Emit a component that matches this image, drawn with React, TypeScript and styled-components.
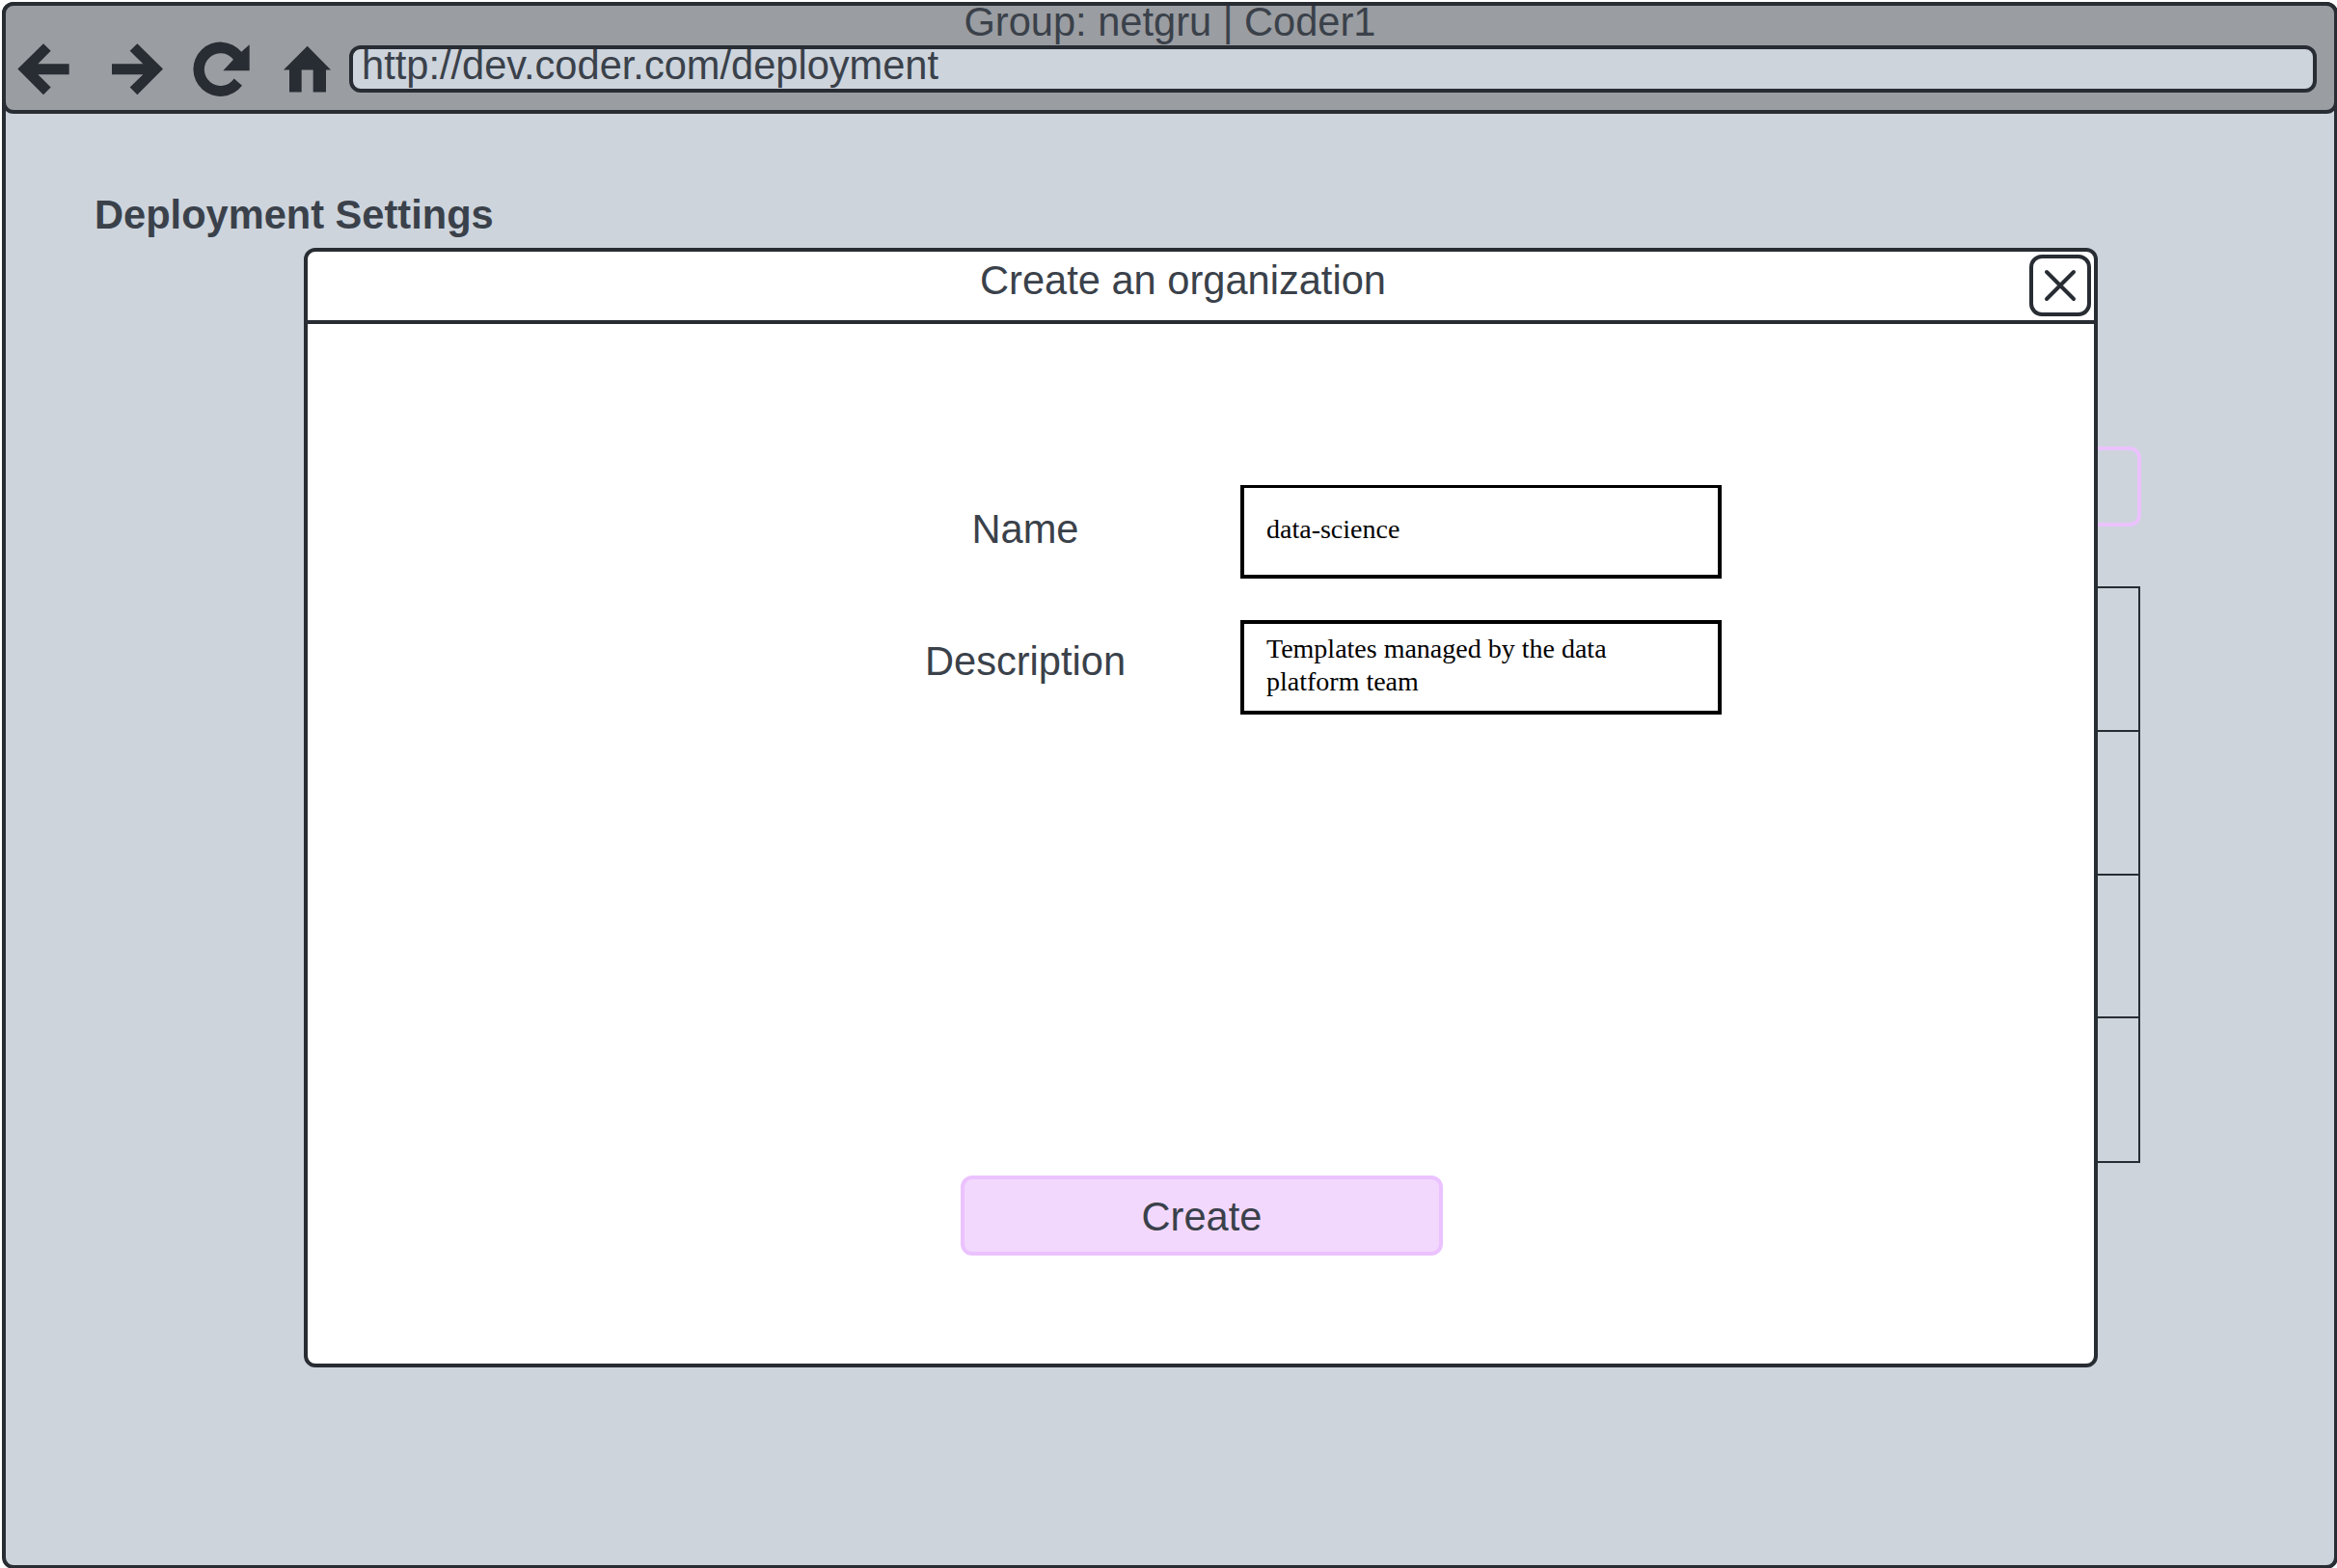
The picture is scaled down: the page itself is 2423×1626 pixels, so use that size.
import React from "react";
import styled, { createGlobalStyle } from "styled-components";

const ink = "#282c33";
const text = "#3a414a";
const page = "#cdd4dc";
const chrome = "#9a9da1";
const pink = "#ebc2ff";
const pinkFill = "#f2d8fd";

const GlobalStyle = createGlobalStyle`
  html, body { margin: 0; padding: 0; background: #fff; overflow: hidden; }
  *, *::before, *::after { box-sizing: border-box; }
`;

const Screen = styled.div`
  width: 2423px;
  height: 1626px;
  overflow: hidden;
  padding: 2px 0 0 2px;
  font-family: "Liberation Sans", Arial, sans-serif;
  font-size: 41.6px;
  color: ${text};
`;

const BrowserWindow = styled.div`
  position: relative;
  width: 2422px;
  height: 1625px;
  border: 4px solid ${ink};
  border-radius: 12px;
  background: ${page};
`;

const Toolbar = styled.header`
  width: 2422px;
  height: 116px;
  margin: -4px 0 0 -4px;
  border: 4px solid ${ink};
  border-radius: 12px;
  background: ${chrome};
`;

const WindowTitle = styled.div`
  height: 41px;
  line-height: 33px;
  text-align: center;
`;

const NavRow = styled.div`
  display: flex;
  align-items: center;
  height: 49px;
  padding-right: 18px;
`;

const NavIcons = styled.nav`
  display: flex;
  flex: none;
  width: 356px;
  padding-left: 12px;
`;

const IconButton = styled.button<{ $width: number; $gap: number }>`
  flex: none;
  width: ${(p) => p.$width}px;
  height: 58px;
  margin: 0 ${(p) => p.$gap}px 0 0;
  padding: 0;
  border: 0;
  background: none;
  color: ${ink};

  svg {
    display: block;
    width: 100%;
    height: 100%;
    fill: currentColor;
  }
`;

const AddressBar = styled.div`
  flex: 1;
  height: 49px;
  padding-left: 9px;
  border: 4px solid ${ink};
  border-radius: 12px;
  background: ${page};
  line-height: 33px;
  white-space: nowrap;
`;

const Content = styled.main`
  padding: 80px 0 0 91px;
`;

const Heading = styled.h1`
  margin: 0;
  padding-left: 1px;
  font-size: 41.6px;
  font-weight: 700;
  line-height: 50px;
`;

const Section = styled.section`
  display: flex;
  flex-direction: column;
  align-items: flex-end;
  width: 2123px;
  padding-top: 215px;
`;

const OutlineButton = styled.div`
  width: 500px;
  height: 83px;
  margin-bottom: 62px;
  border: 4px solid ${pink};
  border-radius: 12px;
`;

const Table = styled.div`
  width: 1700px;
  margin-right: 1px;
  border: 2px solid ${ink};
  border-top: 0;
`;

const TableRow = styled.div<{ $height: number }>`
  height: ${(p) => p.$height}px;
  border-top: 2px solid ${ink};
`;

const Dialog = styled.div`
  position: absolute;
  top: 251px;
  left: 309px;
  display: flex;
  flex-direction: column;
  width: 1860px;
  height: 1161px;
  border: 4px solid ${ink};
  border-radius: 12px;
  background: #fff;
`;

const DialogHeader = styled.div`
  display: flex;
  flex: none;
  height: 75px;
  padding: 3px 3px 0 30px;
  border-bottom: 4px solid ${ink};
`;

const DialogTitle = styled.div`
  flex: 1;
  line-height: 53px;
  text-align: center;
`;

const CloseButton = styled.button`
  width: 64px;
  height: 64px;
  padding: 0;
  border: 4px solid ${ink};
  border-radius: 13px;
  background: #fff;

  svg {
    display: block;
    width: 56px;
    height: 56px;
    fill: none;
    stroke: ${ink};
    stroke-width: 4;
    stroke-linecap: round;
  }
`;

const Form = styled.div`
  display: flex;
  flex: 1;
  flex-direction: column;
  padding: 167px 386px 0 593px;
`;

const Field = styled.label<{ $gap: number }>`
  display: flex;
  justify-content: space-between;
  margin-bottom: ${(p) => p.$gap}px;
`;

const FieldLabel = styled.span<{ $line: number }>`
  width: 302px;
  line-height: ${(p) => p.$line}px;
  text-align: center;
`;

const FieldBox = styled.span<{ $height: number; $top: number }>`
  display: flex;
  align-items: center;
  width: 499px;
  height: ${(p) => p.$height}px;
  padding: 0 60px 5px 23px;
  border: 4px solid #000;
  border-top-width: ${(p) => p.$top}px;
  color: #000;
  font-family: "Liberation Serif", "Times New Roman", serif;
  font-size: 28px;
  line-height: 33.6px;
`;

const DialogFooter = styled.div`
  display: flex;
  justify-content: center;
  padding: 0 0 112px 2px;
`;

const CreateButton = styled.button`
  width: 500px;
  height: 83px;
  padding: 2px 0 0;
  border: 4px solid ${pink};
  border-radius: 12px;
  background: ${pinkFill};
  color: ${text};
  font: inherit;
`;

const rowHeights = [149, 149, 148, 150];

const navItems = [
  {
    label: "Back",
    x: 54,
    width: 54,
    gap: 44,
    d: "M55 213L135 134L158 157L118 197H215V230H118L158 270L135 293Z",
  },
  {
    label: "Forward",
    x: 348,
    width: 54,
    gap: 30,
    d: "M507 213L427 134L404 157L445 197H348V230H445L404 270L427 293Z",
  },
  {
    label: "Reload",
    x: 600,
    width: 59,
    gap: 35,
    d: "M751 160A84.5 84.5 0 1 0 753 265L728 243A50.5 50.5 0 1 1 726 184L694 218H776V137Z",
  },
  {
    label: "Home",
    x: 882,
    width: 50,
    gap: 0,
    d: "M956 142L1029 216H1014V285H974V216H938V285H900V216H882Z",
  },
];

export default function App() {
  return (
    <Screen>
      <GlobalStyle />
      <BrowserWindow>
        <Toolbar>
          <WindowTitle>Group: netgru | Coder1</WindowTitle>
          <NavRow>
            <NavIcons>
              {navItems.map((n) => (
                <IconButton key={n.label} aria-label={n.label} $width={n.width} $gap={n.gap}>
                  <svg viewBox={`${n.x} 127.5 ${n.width * 3} 174`}>
                    <path d={n.d} />
                  </svg>
                </IconButton>
              ))}
            </NavIcons>
            <AddressBar>http://dev.coder.com/deployment</AddressBar>
          </NavRow>
        </Toolbar>
        <Content>
          <Heading>Deployment Settings</Heading>
          <Section>
            <OutlineButton />
            <Table>
              {rowHeights.map((h, i) => (
                <TableRow key={i} $height={h} />
              ))}
            </Table>
          </Section>
        </Content>
        <Dialog role="dialog">
          <DialogHeader>
            <DialogTitle>Create an organization</DialogTitle>
            <CloseButton aria-label="Close">
              <svg viewBox="0 0 56 56">
                <path d="M14 14L42 42M42 14L14 42" />
              </svg>
            </CloseButton>
          </DialogHeader>
          <Form>
            <Field $gap={43}>
              <FieldLabel $line={92}>Name</FieldLabel>
              <FieldBox $height={97} $top={3}>data-science</FieldBox>
            </Field>
            <Field $gap={0}>
              <FieldLabel $line={86}>Description</FieldLabel>
              <FieldBox $height={98} $top={4}>Templates managed by the data platform team</FieldBox>
            </Field>
          </Form>
          <DialogFooter>
            <CreateButton>Create</CreateButton>
          </DialogFooter>
        </Dialog>
      </BrowserWindow>
    </Screen>
  );
}
